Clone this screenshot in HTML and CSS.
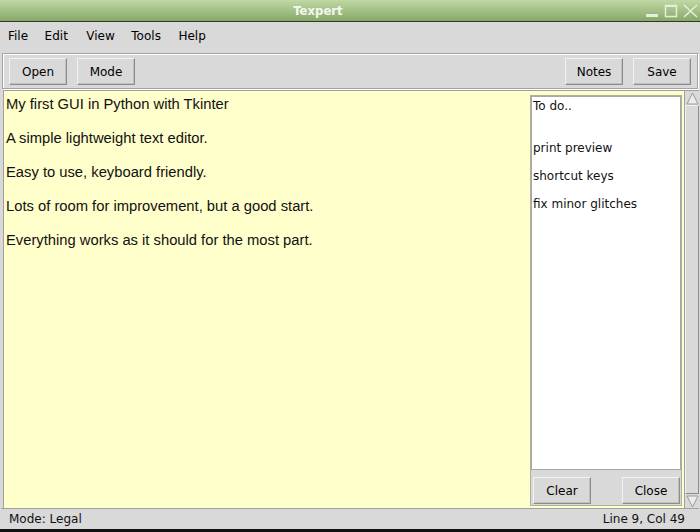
FILE: index.html
```html
<!DOCTYPE html>
<html>
<head>
<meta charset="utf-8">
<link rel="stylesheet" href="styles.css">
</head>
<body>
<div class="window">
  <div class="titlebar">
    <span class="title">Texpert</span>
    <div class="controls">
      <svg class="ctl" width="14" height="14" viewBox="0 0 14 14"><rect x="1" y="10" width="12" height="3" fill="#e6eddf"/></svg>
      <svg class="ctl" width="14" height="14" viewBox="0 0 14 14"><rect x="1.5" y="1.5" width="11" height="11" fill="none" stroke="#e6eddf" stroke-width="1.5"/><rect x="1" y="1" width="12" height="2" fill="#e6eddf"/></svg>
      <svg class="ctl" width="15" height="14" viewBox="0 0 15 14"><path d="M1 1 L14 13 M14 1 L1 13" stroke="#e6eddf" stroke-width="1.6"/></svg>
    </div>
  </div>
  <div class="menubar">
    <span class="menu">File</span>
    <span class="menu">Edit</span>
    <span class="menu wide">View</span>
    <span class="menu">Tools</span>
    <span class="menu wide-sm">Help</span>
  </div>
  <div class="toolbar">
    <div class="group">
      <button class="btn">Open</button>
      <button class="btn">Mode</button>
    </div>
    <div class="group">
      <button class="btn">Notes</button>
      <button class="btn">Save</button>
    </div>
  </div>
  <div class="main">
    <div class="editor">
      <div class="text">
        <p>My first GUI in Python with Tkinter</p>
        <p>A simple lightweight text editor.</p>
        <p>Easy to use, keyboard friendly.</p>
        <p>Lots of room for improvement, but a good start.</p>
        <p>Everything works as it should for the most part.</p>
      </div>
      <div class="notes">
        <div class="notebox">
          <div class="note first">To do..</div>
          <div class="note">print preview</div>
          <div class="note">shortcut keys</div>
          <div class="note">fix minor glitches</div>
        </div>
        <div class="notebtns">
          <button class="btn">Clear</button>
          <button class="btn">Close</button>
        </div>
      </div>
    </div>
    <div class="scrollbar">
      <div class="arrow up"><svg width="13" height="13" viewBox="0 0 13 13"><path d="M1 12 L6.5 1 L12 12 Z" fill="#ececec" stroke="#9a9a9a" stroke-width="1"/></svg></div>
      <div class="slider"></div>
      <div class="arrow down"><svg width="13" height="13" viewBox="0 0 13 13"><path d="M1 1 L6.5 12 L12 1 Z" fill="#ececec" stroke="#9a9a9a" stroke-width="1"/></svg></div>
    </div>
  </div>
  <div class="statusbar">
    <span>Mode: Legal</span>
    <span>Line 9, Col 49</span>
  </div>
</div>
</body>
</html>
```
FILE: styles.css
```css
* { box-sizing: border-box; }
html, body { margin: 0; padding: 0; }
body {
  width: 700px;
  height: 532px;
  background: #d9d9d9;
  font-family: "DejaVu Sans", sans-serif;
  font-size: 12px;
  color: #000;
  overflow: hidden;
}
.window {
  display: flex;
  flex-direction: column;
  height: 532px;
  border-bottom: 3px solid #111;
}
.titlebar {
  height: 22px;
  flex: none;
  background: linear-gradient(#c0d8a4, #87a868);
  border-bottom: 1px solid #2e3a26;
  display: flex;
  align-items: center;
  justify-content: center;
  position: relative;
}
.title {
  font-family: "DejaVu Sans Condensed", "DejaVu Sans", sans-serif;
  font-stretch: condensed;
  font-weight: bold;
  font-size: 13px;
  color: #f4f7f0;
  margin-left: -64px;
}
.controls {
  position: absolute;
  right: 2px;
  top: 4px;
  display: flex;
  gap: 5px;
}
.menubar {
  height: 27px;
  flex: none;
  display: flex;
  align-items: center;
  padding-left: 8px;
  gap: 16.5px;
  font-size: 12px;
}
.menu.wide { margin-left: 2px; }
.menu.wide-sm { margin-left: 1px; }
.toolbar {
  flex: none;
  margin: 4px 2px 0 2px;
  height: 36px;
  border: 1px solid #a3a3a3;
  box-shadow: inset 1px 1px 0 #fff, 1px 1px 0 #fff;
  display: flex;
  justify-content: space-between;
  align-items: center;
  padding: 1px 6px 0 6px;
}
.group { display: flex; gap: 10px; }
.btn {
  font-family: "DejaVu Sans", sans-serif;
  font-size: 12px;
  color: #000;
  background: #d9d9d9;
  height: 27px;
  width: 58px;
  border: 1px solid;
  border-color: #f2f2f2 #8c8c8c #8c8c8c #f2f2f2;
  box-shadow: inset -1px -1px 0 #c0c0c0;
  padding: 0;
  margin: 0;
}
.main {
  flex: 1;
  display: flex;
  margin: 1px 1px 0 3px;
}
.editor {
  flex: 1;
  background: #ffffcc;
  border-top: 1px solid #a0a0a0;
  border-left: 1px solid #a0a0a0;
  display: flex;
  padding: 4px 2px 2px 2px;
}
.text {
  flex: 1;
  font-family: "Liberation Sans", Arial, sans-serif;
  font-size: 14.75px;
  color: #111;
  padding-top: 1px;
}
.text p {
  margin: 0 0 17px 0;
  line-height: 17px;
}
.notes {
  width: 152px;
  flex: none;
  background: #d9d9d9;
  border: 1px solid #b0b0a0;
  display: flex;
  flex-direction: column;
}
.notebox {
  flex: 1;
  background: #fff;
  border: 1px solid #a8a8a8;
  padding: 2px 0 0 1px;
  font-size: 12px;
  color: #111;
}
.note {
  line-height: 14px;
  margin-bottom: 14px;
}
.note.first { margin-bottom: 28px; }
.notebtns {
  height: 35px;
  flex: none;
  display: flex;
  justify-content: space-between;
  align-items: flex-end;
  padding: 0 1px 1px 2px;
}
.scrollbar {
  width: 15px;
  flex: none;
  border-left: 1px solid #a0a0a0;
  border-top: 1px solid #a0a0a0;
  background: #c8c8c8;
  display: flex;
  flex-direction: column;
}
.arrow {
  height: 14px;
  flex: none;
  display: flex;
  justify-content: center;
  align-items: center;
  background: #d9d9d9;
}
.slider {
  flex: 1;
  background: #d9d9d9;
  border: 1px solid;
  border-color: #f2f2f2 #8c8c8c #8c8c8c #f2f2f2;
}
.statusbar {
  height: 21px;
  flex: none;
  display: flex;
  justify-content: space-between;
  align-items: center;
  padding: 0 14px 1px 8px;
  border-top: 1px solid #a0a0a0;
  margin: 0 1px;
  color: #111;
}
```
